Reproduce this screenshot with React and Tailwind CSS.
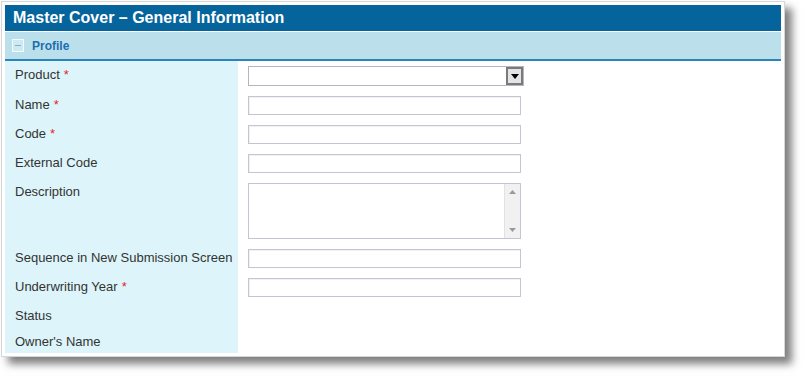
import React from 'react';

const font = { fontFamily: '"Liberation Sans", Arial, sans-serif' };

const Req = () => <span className="text-[#e0262b] ml-1">*</span>;

const TextBox = () => (
  <div className="w-[273px] h-[19px] border border-[#c4c4d2] bg-white shadow-[inset_1px_1px_1px_rgba(0,0,0,0.06)]" />
);

const SelectBox = () => (
  <div className="w-[276px] h-[20px] border border-[#b5b5bf] bg-white flex justify-end items-stretch">
    <div className="w-[17px] border-2 border-[#7a7a7a] bg-[#e4e4e4] flex items-center justify-center">
      <svg width="8" height="5" viewBox="0 0 8 5">
        <path d="M0 0 L8 0 L4 5 Z" fill="#000" />
      </svg>
    </div>
  </div>
);

const TextArea = () => (
  <div className="w-[273px] h-[56px] border border-[#c4c4d2] bg-white flex justify-end">
    <div className="w-[16px] bg-[#f1f1f1] border-l border-[#e2e2e2] flex flex-col items-center justify-between py-[6px]">
      <svg width="7" height="4" viewBox="0 0 7 4">
        <path d="M0 4 L7 4 L3.5 0 Z" fill="#9a9a9a" />
      </svg>
      <svg width="7" height="4" viewBox="0 0 7 4">
        <path d="M0 0 L7 0 L3.5 4 Z" fill="#9a9a9a" />
      </svg>
    </div>
  </div>
);

const Row = ({ label, required, height, children }) => (
  <div className="flex" style={{ height }}>
    <div className="w-[233px] bg-[#ddf5fa] pl-[10px] pt-[2px] text-[13px] leading-[14px] text-[#333]">
      {label}
      {required && <Req />}
    </div>
    <div className="pl-[10px]">{children}</div>
  </div>
);

export default function App() {
  return (
    <div className="w-[805px] h-[378px] bg-white" style={font}>
      <div className="ml-px mt-px w-[784px] border border-[#d6d6d6] bg-white p-[3px] shadow-[7px_7px_8px_rgba(0,0,0,0.5)]">
        <div className="h-[26px] bg-[#05649b] flex items-center pl-2 text-white font-bold text-[16px] leading-none">
          Master Cover – General Information
        </div>
        <div className="mt-px h-[27px] bg-[#bbe0ec] border-b-2 border-[#2a84b8] flex items-center pl-[7px] box-content">
          <div className="w-[12px] h-[13px] border border-[#f4fbfd] bg-[#cdeaf3] flex items-center justify-center">
            <div className="w-[6px] h-px bg-[#7fb0c6]" />
          </div>
          <span className="ml-[8px] text-[12px] font-bold text-[#1b6fac]">Profile</span>
        </div>
        <div className="flex flex-col">
          <div className="flex h-[5px]">
            <div className="w-[233px] bg-[#ddf5fa]" />
          </div>
          <Row label="Product" required height={30}>
            <SelectBox />
          </Row>
          <Row label="Name" required height={29}>
            <TextBox />
          </Row>
          <Row label="Code" required height={29}>
            <TextBox />
          </Row>
          <Row label="External Code" height={29}>
            <TextBox />
          </Row>
          <Row label="Description" height={66}>
            <TextArea />
          </Row>
          <Row label="Sequence in New Submission Screen" height={29}>
            <TextBox />
          </Row>
          <Row label="Underwriting Year" required height={29}>
            <TextBox />
          </Row>
          <Row label="Status" height={26} />
          <Row label="Owner's Name" height={20} />
        </div>
      </div>
    </div>
  );
}
